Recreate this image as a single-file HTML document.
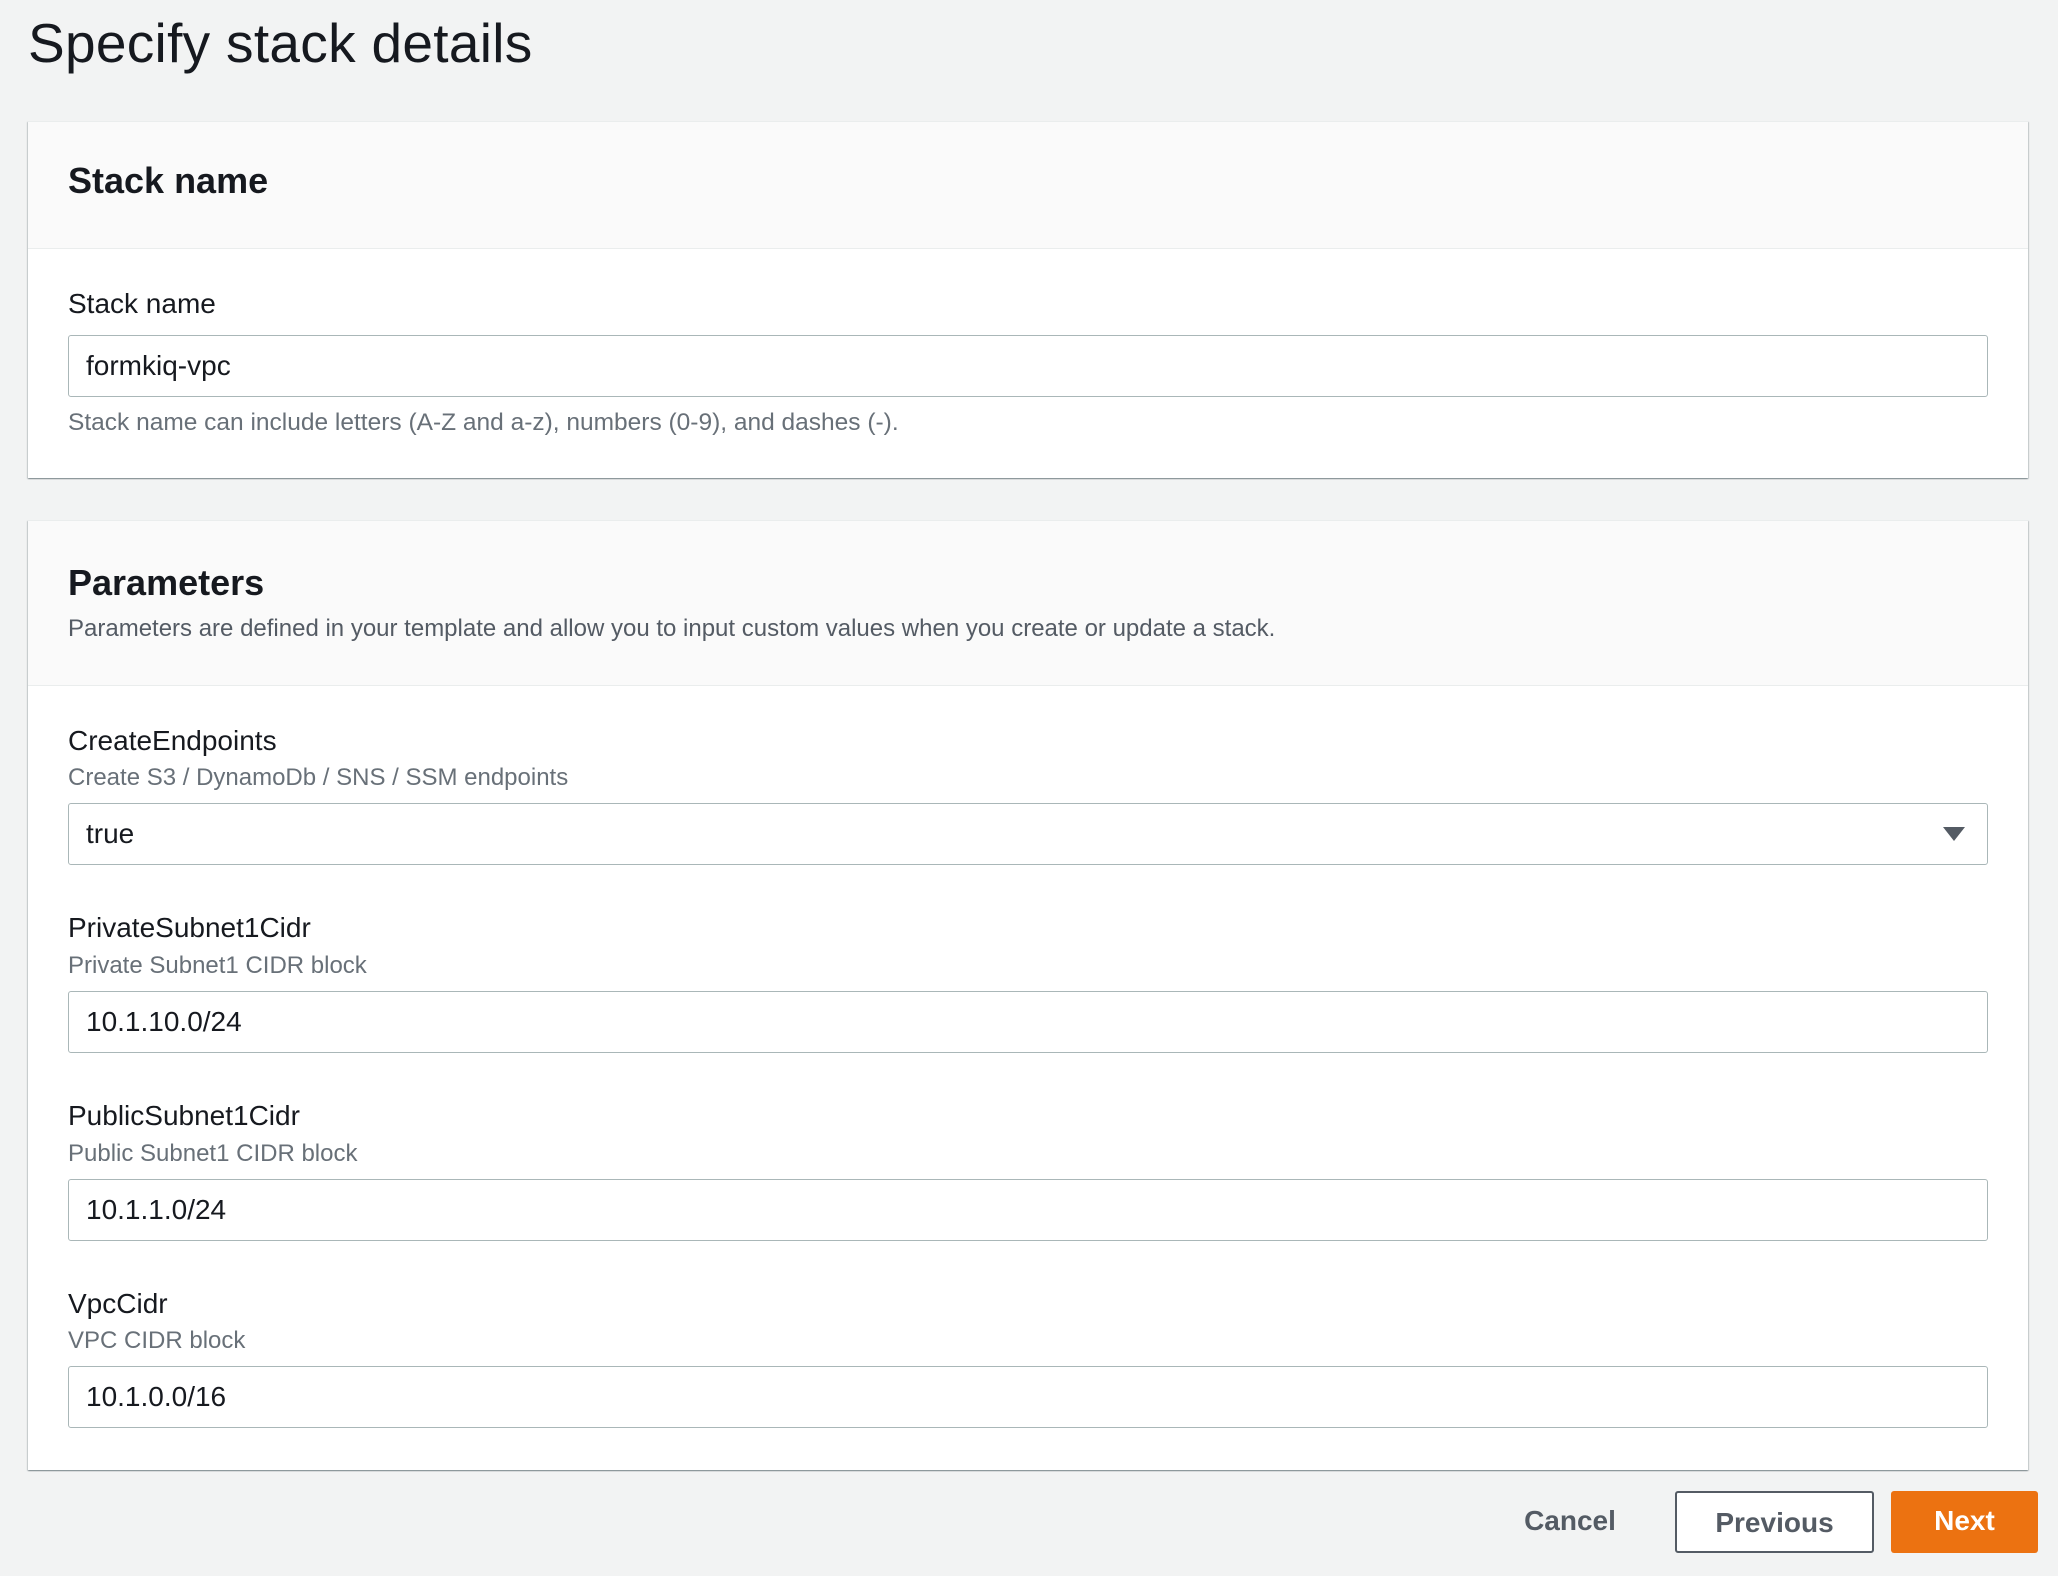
<!DOCTYPE html>
<html><head><meta charset="utf-8"><style>
*{box-sizing:border-box;margin:0;padding:0}
body{width:2058px;height:1576px;background:#f2f3f3;font-family:"Liberation Sans",Arial,sans-serif;color:#16191f;position:relative;overflow:hidden}
.abs{position:absolute}
h1{position:absolute;left:28px;top:11px;font-size:55px;font-weight:400;color:#16191f;letter-spacing:0.3px}
.panel{position:absolute;left:28px;width:2000px;background:#fff;box-shadow:0 1px 1px rgba(0,28,36,.3),1px 1px 1px rgba(0,28,36,.15),-1px 1px 1px rgba(0,28,36,.15);border-top:1px solid #eaeded}
.hdr{position:absolute;left:0;top:0;width:100%;background:#fafafa;border-bottom:1px solid #eaeded}
.lbl{position:absolute;left:68px;font-size:28px;color:#16191f}
.desc{position:absolute;left:68px;font-size:24px;color:#687078}
.inp{position:absolute;left:68px;width:1920px;height:62px;border:1px solid #aab7b8;border-radius:3px;background:#fff;font-size:28px;padding-left:17px;line-height:60px}
.btn{position:absolute;top:1491px;height:62px;font-size:28px;font-weight:700;text-align:center;line-height:60px;border-radius:3px}
</style></head><body>
<h1>Specify stack details</h1>

<div class="panel" style="top:121px;height:357px">
  <div class="hdr" style="height:127px"></div>
</div>
<div class="abs" style="left:68px;top:160px;font-size:36px;font-weight:700">Stack name</div>
<div class="lbl" style="top:288px">Stack name</div>
<div class="inp" style="top:335px">formkiq-vpc</div>
<div class="desc" style="top:409px;font-size:24.5px">Stack name can include letters (A-Z and a-z), numbers (0-9), and dashes (-).</div>

<div class="panel" style="top:520px;height:950px">
  <div class="hdr" style="height:165px"></div>
</div>
<div class="abs" style="left:68px;top:562px;font-size:36px;font-weight:700">Parameters</div>
<div class="desc" style="top:615px;color:#545b64">Parameters are defined in your template and allow you to input custom values when you create or update a stack.</div>

<div class="lbl" style="top:725px">CreateEndpoints</div>
<div class="desc" style="top:764px">Create S3 / DynamoDb / SNS / SSM endpoints</div>
<div class="inp" style="top:803px">true
  <svg class="abs" style="right:22px;top:23px" width="22" height="14" viewBox="0 0 22 14"><path d="M0 0H22L11 14Z" fill="#545b64"/></svg>
</div>

<div class="lbl" style="top:912px">PrivateSubnet1Cidr</div>
<div class="desc" style="top:952px">Private Subnet1 CIDR block</div>
<div class="inp" style="top:991px">10.1.10.0/24</div>

<div class="lbl" style="top:1100px">PublicSubnet1Cidr</div>
<div class="desc" style="top:1140px">Public Subnet1 CIDR block</div>
<div class="inp" style="top:1179px">10.1.1.0/24</div>

<div class="lbl" style="top:1288px">VpcCidr</div>
<div class="desc" style="top:1327px">VPC CIDR block</div>
<div class="inp" style="top:1366px">10.1.0.0/16</div>

<div class="btn" style="left:1510px;width:120px;color:#545b64">Cancel</div>
<div class="btn" style="left:1675px;width:199px;border:2px solid #545b64;background:#fff;color:#545b64">Previous</div>
<div class="btn" style="left:1891px;width:147px;background:#ec7211;color:#fff">Next</div>
</body></html>
